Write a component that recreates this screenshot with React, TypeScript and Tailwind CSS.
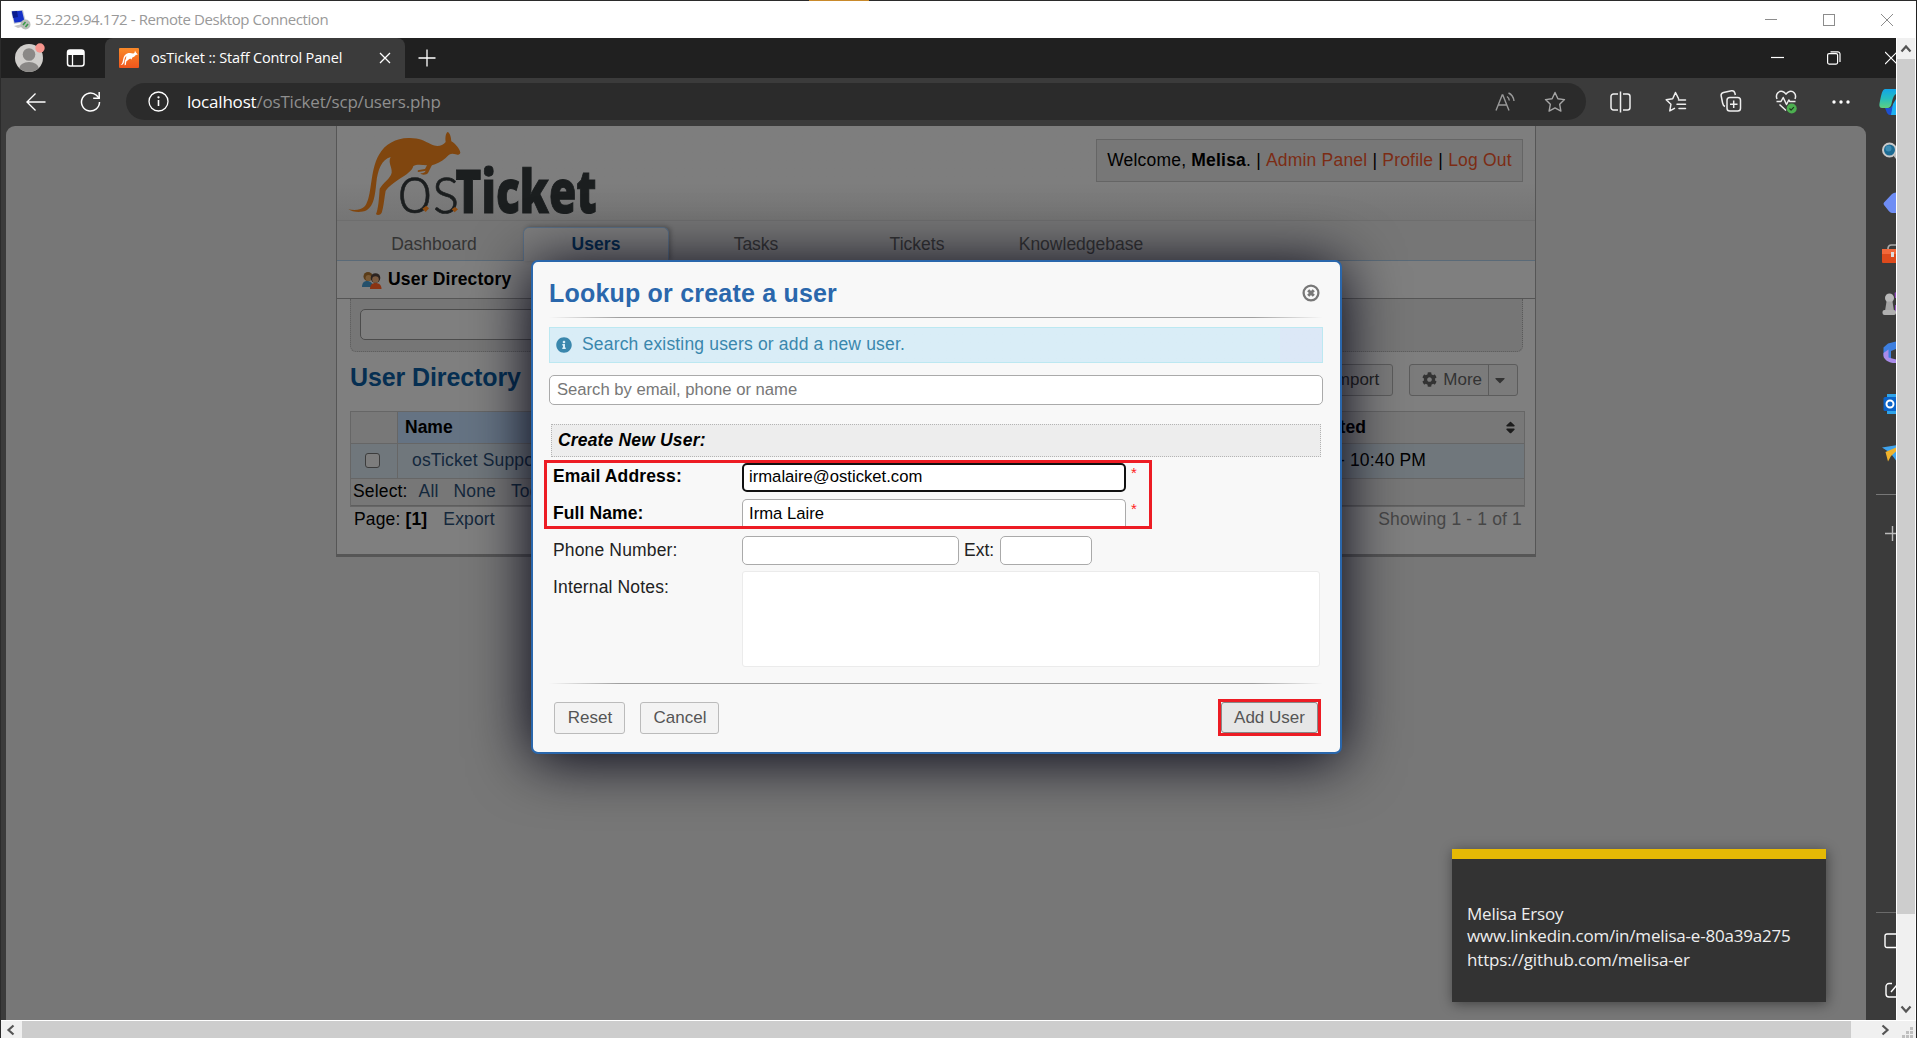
import React from "react";
import { FaCog, FaInfoCircle, FaSort, FaCaretDown } from "react-icons/fa";

const ui = "font-['Open_Sans','Noto_Sans',sans-serif]";

function TitleBar() {
  return (
    <div className={`flex h-[37px] shrink-0 items-center bg-white pl-[9px] ${ui}`}>
      <svg width="22" height="22" viewBox="0 0 22 22">
        <path d="M1 2l12-1 3 12-12 2z" fill="#c9ced6" />
        <path d="M2 2.500l10-.8 2.500 10.500-10 1.500z" fill="#1531c8" />
        <path d="M2 2.500l5-.4 1 6-5 .8z" fill="#0a1c8c" />
        <path d="M4 17l8-2 3 2-7 2z" fill="#c4c4c4" />
        <circle cx="15.500" cy="15.500" r="5" fill="#b9bdb9" />
        <path d="M13 16l2.500-3M15.500 18l2.500-3" stroke="#3b9a4a" strokeWidth="1.600" />
      </svg>
      <span className="ml-[3px] text-[15px] tracking-[-0.41px] whitespace-nowrap text-[#999]">
        52.229.94.172 - Remote Desktop Connection
      </span>
      <div className="ml-auto flex items-center gap-[46px] pr-[23px] text-[#8c8c8c]">
        <svg width="12" height="12" viewBox="0 0 12 12" stroke="currentColor" fill="none"><path d="M0 5.500h12" /></svg>
        <svg width="12" height="12" viewBox="0 0 12 12" stroke="currentColor" fill="none"><rect x=".5" y=".5" width="11" height="11" /></svg>
        <svg width="12" height="12" viewBox="0 0 12 12" stroke="currentColor" fill="none"><path d="M0 0l12 12M12 0L0 12" /></svg>
      </div>
    </div>
  );
}

function TabStrip() {
  return (
    <div className={`flex h-[40px] shrink-0 items-center bg-[#202020] text-white ${ui}`}>
      <div className="flex h-full w-[104px] items-center pl-[14px]">
        <svg width="32" height="30" viewBox="0 0 32 30">
          <clipPath id="avatar"><circle cx="14" cy="15" r="14" /></clipPath>
          <circle cx="14" cy="15" r="14" fill="#d0cecb" />
          <g clipPath="url(#avatar)" fill="#8a8886">
            <circle cx="14" cy="11.500" r="6.300" />
            <ellipse cx="14" cy="26" rx="10" ry="7" />
          </g>
          <circle cx="25" cy="5" r="4.700" fill="#f7958d" />
        </svg>
        <svg className="ml-[19px]" width="20" height="20" viewBox="0 0 20 20" fill="none">
          <rect x="1.500" y="2" width="16.500" height="16" rx="2.500" stroke="#fff" strokeWidth="1.500" />
          <path d="M1.500 7V4a2 2 0 012-2h12.500a2 2 0 012 2v3z" fill="#fff" />
          <path d="M6.500 7v11" stroke="#fff" strokeWidth="1.300" />
        </svg>
      </div>
      <div className="flex h-full w-[300px] items-center rounded-t-lg bg-[#3b3b3b] pl-[14px]">
        <svg width="20" height="20" viewBox="0 0 20 20">
          <defs>
            <linearGradient id="fav" x1="0" y1="0" x2="0" y2="1"><stop offset="0" stopColor="#fa8a2a" /><stop offset="1" stopColor="#f0551c" /></linearGradient>
          </defs>
          <rect width="20" height="20" rx="1" fill="url(#fav)" />
          <path d="M1.500 16.800C4.500 17.200 5 14.500 5.300 12.500C5.600 10.500 6.200 8.800 7.300 8L7 10.500L5.800 13L5.600 17.300L6.800 17L7.300 13.600L10 11.200L11.200 10.600L12.400 11.600L13.600 9.300C15 9 16 8 16.800 6.900L18.800 6.600L16.800 4.300L16 2.600L15.600 4.600C14.800 6 13.200 5.200 11 5.100C7 5 5 7.500 4.200 11C3.600 14 3.500 16 1.500 16.800Z" fill="#fff" />
        </svg>
        <span className="ml-[12px] w-[212px] text-[14.500px] tracking-[-0.17px] whitespace-nowrap">osTicket :: Staff Control Panel</span>
        <svg className="ml-[16px]" width="12" height="12" viewBox="0 0 12 12" stroke="#fff" strokeWidth="1.300"><path d="M1 1l10 10M11 1L1 11" /></svg>
      </div>
      <svg className="ml-[13px]" width="18" height="18" viewBox="0 0 18 18" stroke="#fff" strokeWidth="1.300"><path d="M9 .5v17M.5 9h17" /></svg>
      <div className="ml-auto flex items-center">
        <svg width="13" height="14" viewBox="0 0 13 14" stroke="#fff" strokeWidth="1.200"><path d="M0 6.500h13" /></svg>
        <svg className="ml-[43px]" width="14" height="14" viewBox="0 0 14 14" stroke="#fff" strokeWidth="1.200" fill="none">
          <rect x=".6" y="2.600" width="10" height="10.500" rx="1.500" />
          <path d="M3.500 .8h7a2.300 2.300 0 012.500 2.300v8" />
        </svg>
        <svg className="ml-[44px]" width="11" height="14" viewBox="0 0 11 14" stroke="#fff" strokeWidth="1.200"><path d="M0 1l12 12M12 1L0 13" /></svg>
      </div>
    </div>
  );
}

function Toolbar() {
  return (
    <div className={`flex h-[48px] shrink-0 items-center bg-[#3b3b3b] pb-px ${ui}`}>
      <svg className="ml-[25px]" width="20" height="20" viewBox="0 0 21 20" stroke="#fff" strokeWidth="1.400" fill="none"><path d="M20.500 10H1M10 1L1 10l9 9" /></svg>
      <svg className="ml-[34px]" width="21" height="22" viewBox="0 0 21 22" stroke="#fff" strokeWidth="1.500" fill="none">
        <path d="M19.500 11a9 9 0 11-3-6.700L19 7" />
        <path d="M19.200 1v6.300h-6" />
      </svg>
      <div className="ml-[25px] flex h-[37px] w-[1460px] items-center rounded-full bg-[#2b2b2b] pr-[20px] pl-[22px]">
        <svg width="21" height="21" viewBox="0 0 21 21" stroke="#fff" strokeWidth="1.300" fill="none">
          <circle cx="10.500" cy="10.500" r="9.500" />
          <path d="M10.500 9v6" strokeWidth="1.600" />
          <circle cx="10.500" cy="6.300" r=".5" />
        </svg>
        <span className="ml-[18px] pt-px text-[17px] tracking-[-0.2px] whitespace-nowrap text-[#8f8f8f]">
          <span className="text-white">localhost</span>/osTicket/scp/users.php
        </span>
        <svg className="ml-auto" width="22" height="20" viewBox="0 0 22 20" stroke="#999" strokeWidth="1.400" fill="none">
          <path d="M1 18.500L7.200 3h.6L14 18.500M3.300 13h8.400M12 4.500c1.500 1 2.200 2.300 2.300 4M13.500 1c3 1.300 5 4 5.500 8" />
        </svg>
        <svg className="ml-[27px]" width="22" height="22" viewBox="0 0 22 22" stroke="#a5a5a5" strokeWidth="1.400" fill="none" strokeLinejoin="round">
          <path d="M11 1.500l2.900 6.200 6.600.9-4.800 4.700 1.200 6.800L11 16.900l-5.900 3.200 1.200-6.800L1.500 8.600l6.600-.9z" />
        </svg>
      </div>
      <svg className="ml-[24px]" width="21" height="22" viewBox="0 0 21 22" stroke="#eee" strokeWidth="1.500" fill="none">
        <path d="M8 3H3.500A2.500 2.500 0 001 5.500v11A2.500 2.500 0 003.500 19H8M13 3h4.500A2.500 2.500 0 0120 5.500v11a2.500 2.500 0 01-2.500 2.500H13M10.500 .5v21" />
      </svg>
      <svg className="ml-[34px]" width="22" height="22" viewBox="0 0 22 22" stroke="#eee" strokeWidth="1.500" fill="none" strokeLinejoin="round" strokeLinecap="round">
        <path d="M13.500 7.500L10.500 1.500 7.700 7.700 1.200 8.700l4.700 4.600-1.100 6.600 4.700-2.500M13.500 9h7M12 13.200h8.500M14 17.500h6.500" />
      </svg>
      <svg className="ml-[33px]" width="22" height="23" viewBox="0 0 22 23" stroke="#eee" strokeWidth="1.500" fill="none">
        <rect x="7" y="7.500" width="13.500" height="13.500" rx="2.800" />
        <path d="M13.700 10.500v7.500M10 14.300h7.500M5 16.500C3.500 16 3 15 2.600 13L1.200 6C.8 4 1.800 2.800 3.500 2.400l8-1.600C13.500.5 14.500 1.500 15 3.500l.3 1.500" />
      </svg>
      <svg className="ml-[33px]" width="23" height="26" viewBox="0 0 23 26" stroke="#eee" strokeWidth="1.500" fill="none" strokeLinejoin="round">
        <path d="M2 10C0 5 4 1.500 7.500 2.500c1.500.4 2.600 1.400 3.500 2.600 1-1.200 2-2.200 3.500-2.600C18 1.500 22 5 20 10M1.500 12.500H6l2.200-4 3.300 7 2.300-4.500 1 1.500H20.500M4.500 15.500l6.500 6" />
        <circle cx="16.700" cy="19.500" r="5" fill="#4caf50" stroke="none" />
        <path d="M14.500 19.500l1.600 1.600 2.800-3" stroke="#1d3b1e" strokeWidth="1.200" />
      </svg>
      <svg className="ml-[34px]" width="18" height="4" viewBox="0 0 18 4" fill="#fff"><circle cx="2" cy="2" r="1.700" /><circle cx="9" cy="2" r="1.700" /><circle cx="16" cy="2" r="1.700" /></svg>
      <svg className="ml-auto" width="17" height="28" viewBox="0 0 17 28">
        <defs>
          <linearGradient id="cp" x1="0" y1="0" x2="0" y2="1"><stop offset="0" stopColor="#12a5e8" /><stop offset=".5" stopColor="#25bdc0" /><stop offset="1" stopColor="#5fd07e" /></linearGradient>
        </defs>
        <path d="M6 1h11v5c-3 2-3.500 6-4.500 10-.7 2.800-2 4-4 4H3c-3 0-3-3-2-7C2.500 6 3 2 6 1z" fill="url(#cp)" />
        <path d="M6 20h5l6-6v13h-6c-3 0-3.500-4-5-7z" fill="#1d4fd0" />
        <path d="M14 16l3-5v16h-5z" fill="#1eb1f0" />
      </svg>
    </div>
  );
}

const sidebarIcons: React.ReactNode[] = [
  <g key="search">
    <circle cx="10.500" cy="24" r="6.500" fill="#1c6b93" stroke="#c9c9c9" strokeWidth="2" />
    <circle cx="9.500" cy="22.500" r="3" fill="#3d8cb3" />
    <path d="M15.500 28.500l3 4" stroke="#bbb" strokeWidth="3" />
  </g>,
  <path key="tag" d="M5 25.500L13 17q1.500-1.500 4-1.500V36h-4q-1.500 0-3-1.700L5 28q-1-1.200 0-2.500z" fill="#6e8df5" />,
  <g key="toolbox">
    <path d="M9 22c0-3 1-4 3.500-4H17" stroke="#aaa" strokeWidth="1.700" fill="none" />
    <rect x="3" y="22" width="16" height="14" rx="1" fill="#dd4a1c" />
    <rect x="3" y="22" width="16" height="5" fill="#f2683a" />
    <rect x="12" y="25" width="3" height="5" fill="#ddd" />
  </g>,
  <g key="chess">
    <path d="M15.500 15l1.500-1v6h-1zM16 27h1v7h-1z" fill="#8d49b8" />
    <circle cx="10.500" cy="20" r="4.500" fill="#b9b9b9" />
    <path d="M7.500 23.500h6l1.500 9.500h-9z" fill="#a5a5a5" />
    <rect x="3.500" y="32" width="13.500" height="5" rx="2" fill="#b0b0b0" />
  </g>,
  <g key="m365">
    <path d="M9 15.500l8-2v7.500l-5 2v9l-4-1.500-3.500-3v-8z" fill="#3d7fe0" />
    <path d="M4.500 25l5-3.500v8l7.500 2v3.500h-3c-4 0-9.500-4-9.500-7z" fill="#a98bea" />
  </g>,
  <g key="outlook">
    <rect x="8" y="15" width="10" height="20" fill="#2fa4ea" />
    <rect x="4.500" y="18" width="15" height="14" rx="1.500" fill="#0b63c8" />
    <circle cx="11" cy="25" r="3.500" fill="none" stroke="#fff" strokeWidth="2" />
  </g>,
  <g key="plane">
    <path d="M3 18.500L18 16v17l-6.500-9z" fill="#3fa4ee" />
    <path d="M6.500 23L18 18v3.500L12 27l-3 5.500z" fill="#f0b32c" />
  </g>,
];

function Sidebar() {
  return (
    <div className="flex w-[30px] shrink-0 flex-col bg-[#3b3b3b]">
      {sidebarIcons.map((icon, i) => (
        <svg key={i} className="ml-[13px]" width="17" height="50.500" viewBox="0 0 17 50.500">{icon}</svg>
      ))}
      <div className="mt-[14px] ml-[10px] h-px bg-[#777]" />
      <svg className="mt-[31px] ml-[19px]" width="11" height="16" viewBox="0 0 11 16" stroke="#bbb" strokeWidth="1.400"><path d="M7.500 0v15M0 7.500h12" /></svg>
      <div className="mt-auto ml-[10px] h-px bg-[#6a6a6a]" />
      <svg className="mt-[20px] ml-[18px]" width="12" height="16" viewBox="0 0 12 16" stroke="#fff" strokeWidth="1.400" fill="none"><rect x="1" y="1" width="18" height="13.500" rx="2" /></svg>
      <svg className="mt-[33px] mb-[22px] ml-[19px]" width="11" height="16" viewBox="0 0 11 16" stroke="#fff" strokeWidth="1.400" fill="none"><path d="M7 1.500H4a3 3 0 00-3 3V12a3 3 0 003 3h8M6 10l6-7" /></svg>
    </div>
  );
}

function Logo() {
  return (
    <svg className="overflow-visible" width="254" height="87" viewBox="45 30 762 261">
      <path
        fill="#80460f"
        d="M52 268C72 272 92 270 102 258C124 230 116 150 144 104C162 72 195 55 232 54C262 53 280 62 300 73C318 82 334 78 344 66C342 52 344 40 350 36C358 40 360 52 361 64C374 72 386 86 388 98C386 104 380 106 374 103C362 98 354 102 344 114C330 126 314 132 303 136C296 146 294 160 286 163C278 166 270 164 268 160C276 160 282 158 284 152L262 156C258 154 260 150 264 150L282 147L288 136C272 134 256 132 247 138C244 152 226 164 206 176C186 190 172 200 164 212C160 232 158 262 152 278C148 286 138 286 135 282C142 266 144 236 146 206C158 186 178 176 182 158C184 142 170 128 179 111C152 118 140 150 136 188C132 228 128 256 108 270C90 280 64 276 52 268Z"
      />
      <g fill="#1b1e1f" stroke="#1b1e1f">
        <text x="199" y="280" fontSize="210" fontFamily="'Lato', 'Open Sans', sans-serif" fontWeight="300" strokeWidth="2" textLength="186" lengthAdjust="spacingAndGlyphs">os</text>
        <text x="373" y="279" fontSize="180" fontFamily="'Open Sans', sans-serif" fontWeight="800" strokeWidth="3" textLength="424" lengthAdjust="spacingAndGlyphs">Ticket</text>
      </g>
      <path d="M274 266l12-9 8 8-10 11zM362 268l10-7 9 7-10 9z" fill="#8f4d12" />
    </svg>
  );
}

const linkRed = "text-[#7c2c14]";

function PageHeader() {
  return (
    <div className="flex h-[95px] items-start justify-between border-b border-[#6e6e6e] bg-linear-to-b from-[#7e7e7e] from-60% to-[#757575] pt-[4px] pr-[12px] pl-[9px]">
      <Logo />
      <div className="mt-[9px] flex h-[43px] w-[427px] items-center justify-center border border-[#656565] bg-[#777] tracking-[0.2px] whitespace-pre text-black">
        Welcome, <b>Melisa</b>. | <span className={linkRed}>Admin Panel</span> | <span className={linkRed}>Profile</span> | <span className={linkRed}>Log Out</span>
      </div>
    </div>
  );
}

function Nav() {
  const tab = "flex h-[34px] w-[144px] items-center justify-center pt-[2px]";
  return (
    <div className="flex h-[40px] items-end gap-[17px] border-b border-[#5a6a78] bg-[#767676] pl-[25px] text-[#343434]">
      <div className={tab}>Dashboard</div>
      <div className="-mb-px mr-[-2px] flex h-[34px] w-[146px] items-center justify-center rounded-t-[6px] border border-b-0 border-[#5a6f85] bg-[#7e7e7e] font-bold tracking-[0.1px] text-[#06294b] shadow-[2px_-1px_4px_rgba(0,0,0,0.25)]">Users</div>
      <div className={tab}>Tasks</div>
      <div className={tab}>Tickets</div>
      <div className="flex h-[34px] w-[150px] items-center justify-center pt-[2px]">Knowledgebase</div>
    </div>
  );
}

function SubNav() {
  return (
    <div className="flex h-[38px] items-center border-b border-[#555] pl-[25px] font-bold text-black">
      <svg width="20" height="18" viewBox="0 0 20 18">
        <path d="M0 16c0-4 2-6 5-6s6 2 6 6z" fill="#24506b" />
        <circle cx="6" cy="5.500" r="4.500" fill="#5a3c18" />
        <circle cx="6.500" cy="7" r="3" fill="#7a5a35" />
        <path d="M8 18c0-4 2-6 5.500-6s6 2 6 6z" fill="#8a3414" />
        <circle cx="13.500" cy="7" r="4.800" fill="#2b2320" />
        <circle cx="13.500" cy="8.500" r="3.300" fill="#7a5a40" />
      </svg>
      <span className="ml-[6px] tracking-[0.2px]">User Directory</span>
    </div>
  );
}

function Directory() {
  const btn = "flex h-[32px] items-center rounded-[3px] border border-[#5c5c5c] bg-[#7b7b7b] text-[17px] tracking-normal";
  return (
    <div className="pr-[10px] pl-[13px] tracking-[0.15px]">
      <div className="mr-[2px] flex h-[53px] items-center rounded-b-[6px] border border-t-0 border-dotted border-[#5a5a5a] bg-[#767676] pb-[2px] pl-[9px]">
        <div className="h-[31px] w-[400px] rounded-[5px] border border-[#4c4c4c] bg-[#7f7f7f]" />
      </div>
      <div className="flex h-[59px] items-center pb-[6px]">
        <h2 className="mt-[-2px] text-[25px] font-bold tracking-[-0.1px] text-[#062f52]">User Directory</h2>
        <div className={`${btn} mt-[2px] ml-auto pr-[13px] pl-[34px] text-[#222]`}>Import</div>
        <div className={`${btn} mt-[2px] mr-[7px] ml-[16px] text-[#333]`}>
          <FaCog className="ml-[12px]" size={15} />
          <span className="mr-[6px] ml-[6px]">More</span>
          <span className="flex h-full w-[29px] items-center justify-center border-l border-[#5c5c5c] pr-[6px]"><FaCaretDown size={16} /></span>
        </div>
      </div>
      <div className="border border-[#666] text-black">
        <div className="grid h-[32px] grid-cols-[47px_880px_1fr] items-stretch border-b border-[#666] bg-[#787878] font-bold">
          <div className="border-r border-[#666]" />
          <div className="flex items-center bg-[#657383] pb-px pl-[7px] tracking-normal">Name</div>
          <div className="flex items-center justify-between pr-[6px] pb-px pl-[22px]"><span>Created</span><FaSort size={15} className="text-[#1c1c1c]" /></div>
        </div>
        <div className="grid h-[35px] grid-cols-[47px_880px_1fr] items-stretch border-b border-[#666] bg-[#70777c]">
          <div className="flex items-center justify-center border-r border-[#666] pr-[3px] pb-px"><span className="size-[15px] rounded-[3px] border border-[#3c3c3c] bg-[#7d7d7d]" /></div>
          <div className="flex items-center pb-[2px] pl-[14px] text-[#14283c]">osTicket Support</div>
          <div className="flex items-center pb-[2px] pl-[61px]">- 10:40 PM</div>
        </div>
        <div className="flex h-[27px] items-center gap-[15px] border-b border-[#5e5e5e] bg-[#777] pb-[1px] pl-[2px]">
          <span className="mr-[-4px]">Select:</span>
          <span className="text-[#14283c]">All</span>
          <span className="text-[#14283c]">None</span>
          <span className="text-[#14283c]">Toggle</span>
        </div>
      </div>
      <div className="flex h-[25px] items-center pl-[4px]">
        <span>Page: <b>[1]</b></span>
        <span className="ml-[16px] text-[#14283c]">Export</span>
        <span className="mr-[3px] ml-auto text-[#464646]">Showing 1 - 1 of 1</span>
      </div>
    </div>
  );
}

function Rule({ className }: { className: string }) {
  return (
    <div className={`flex h-px shrink-0 ${className}`}>
      <div className="w-[70px] bg-linear-to-r from-transparent to-[#a0a0a0]" />
      <div className="flex-1 bg-[#a0a0a0]" />
      <div className="w-[70px] bg-linear-to-r from-[#a0a0a0] to-transparent" />
    </div>
  );
}

function Dialog() {
  const field = "rounded-[5px] border border-[#aaa] bg-white";
  const btn = "flex items-center justify-center rounded-[3px] border border-[#bbb] bg-[#f3f3f3] pl-px text-[17px] text-[#555]";
  return (
    <div className="absolute top-[260px] left-[530px] flex h-[494px] w-[811px] flex-col rounded-[7px] border-2 border-[#2a67ac] bg-[#f8f8f8] pr-[17px] pl-[16px] text-black shadow-[0_5px_60px_#000011]">
      <div className="flex h-[55px] items-center justify-between pt-[7px] pr-[3px]">
        <h3 className="pt-px text-[25px] font-bold tracking-[0.2px] text-[#2a67ac]">Lookup or create a user</h3>
        <svg width="18" height="18" viewBox="0 0 18 18" fill="none" stroke="#777">
          <circle cx="9" cy="9" r="7.400" strokeWidth="2.300" />
          <path d="M6.200 6.200l5.600 5.600M11.800 6.200l-5.600 5.600" strokeWidth="3" />
        </svg>
      </div>
      <Rule className="" />
      <div className="mt-[9px] flex h-[36px] items-center border border-[#bce8f1] bg-linear-to-r from-[#d9edf7] from-[94.600%] to-[#dce8f7] to-[94.600%] pb-[1px] pl-[6px] text-[#3a87ad]">
        <FaInfoCircle size={16} />
        <span className="ml-[10px] tracking-[0.17px]">Search existing users or add a new user.</span>
      </div>
      <div className={`${field} mt-[12px] flex h-[30px] items-center pb-[1px] pl-[7px] text-[16.670px] tracking-[-0.02px] text-[#777]`}>Search by email, phone or name</div>
      <div className="mx-[2px] mt-[19px] flex h-[33px] items-center border border-dotted border-[#b4b4b4] bg-[#ededed] pl-[6px] font-bold tracking-[0.17px] italic">Create New User:</div>
      <div className="relative mt-[3px] flex h-[71px] flex-col pl-[4px]">
        <div className="absolute top-0 left-[-5px] h-[69px] w-[608px] border-[3px] border-[#ed1c24]" />
        <div className="mt-[3px] flex h-[28px] items-center">
          <span className="w-[189px] pb-[2px] font-bold tracking-[0.15px]">Email Address:</span>
          <div className="flex h-[29px] w-[384px] items-center rounded-[5px] border-2 border-[#111] bg-white pb-[1px] pl-[5px] text-[16.670px]">irmalaire@osticket.com</div>
          <span className="ml-[5px] self-start text-[15px] leading-[20px] text-[#f22]">*</span>
        </div>
        <div className="mt-[8px] flex h-[28px] items-center">
          <span className="w-[189px] pt-px font-bold tracking-[0.1px]">Full Name:</span>
          <div className={`${field} flex h-[28px] w-[384px] items-center rounded-b-none border-b-0 pl-[6px] text-[16.670px]`}>Irma Laire</div>
          <span className="ml-[5px] self-start text-[15px] leading-[20px] text-[#f22]">*</span>
        </div>
      </div>
      <div className="mt-[5px] flex h-[29px] items-center pl-[4px]">
        <span className="w-[189px] tracking-[0.15px] text-[#222]">Phone Number:</span>
        <div className={`${field} h-[29px] w-[217px]`} />
        <span className="w-[41px] pl-[5px] text-[#222]">Ext:</span>
        <div className={`${field} h-[29px] w-[92px]`} />
      </div>
      <div className="mt-[6px] flex pl-[4px]">
        <span className="w-[189px] pt-[3px] tracking-[0.15px] text-[#222]">Internal Notes:</span>
        <div className="h-[96px] w-[578px] rounded-[3px] border border-[#ebebeb] bg-white" />
      </div>
      <Rule className="mt-[16px]" />
      <div className="mt-[15px] flex items-center pr-[2px] pl-[5px]">
        <div className={`${btn} h-[32px] w-[71px]`}>Reset</div>
        <div className={`${btn} ml-[15px] h-[32px] w-[79px]`}>Cancel</div>
        <div className="ml-auto flex h-[37px] w-[103px] border-[3px] border-[#ed1c24]">
          <div className="flex flex-1 items-center justify-center rounded-[3px] border border-[#888] bg-[#e6e6e6] text-[17px] text-[#555]">Add User</div>
        </div>
      </div>
    </div>
  );
}

function StickyNote() {
  return (
    <div className={`absolute top-[849px] left-[1451px] flex h-[153px] w-[374px] flex-col border-t-[10px] border-[#e6b905] bg-[#333] pt-[43px] pl-[15px] text-[17px] leading-[23px] tracking-[-0.2px] text-[#eee] shadow-[1px_2px_12px_rgba(0,0,0,0.45)] ${ui}`}>
      <span>Melisa Ersoy</span>
      <span className="leading-[22px]">www.linkedin.com/in/melisa-e-80a39a275</span>
      <span className="leading-[25px] tracking-[-0.15px]">https://github.com/melisa-er</span>
    </div>
  );
}

function Chevron({ d }: { d: string }) {
  return <svg width="12" height="12" viewBox="0 0 12 12" fill="none" stroke="#555" strokeWidth="2.200"><path d={d} /></svg>;
}

export default function App() {
  return (
    <div className="relative flex h-[1038px] w-[1917px] flex-col overflow-hidden border-x border-l-[#2b2b2b] border-r-[#222] bg-[#f0f0f0] font-['Liberation_Sans',Arial,sans-serif] text-[17.500px]">
      <div className="flex h-px shrink-0 bg-[#2b2b2b]"><div className="ml-[808px] h-px w-[60px] bg-[#c98a2b]" /></div>
      <TitleBar />
      <div className="flex h-[982px] shrink-0">
        <div className="flex w-[1895px] shrink-0 flex-col">
          <TabStrip />
          <Toolbar />
          <div className="flex flex-1 bg-[#3b3b3b]">
            <div className="ml-[5px] flex w-[1860px] items-start rounded-t-[9px] bg-[#777]">
              <div className="ml-[330px] h-[431px] w-[1200px] border-x border-b-[3px] border-[#565656] bg-[#7f7f7f]">
                <PageHeader />
                <Nav />
                <SubNav />
                <Directory />
              </div>
            </div>
            <Sidebar />
          </div>
        </div>
        <div className="flex w-[20px] shrink-0 flex-col border-x border-white bg-[#f0f0f0]">
          <div className="flex h-[21px] items-center justify-center"><Chevron d="M1.500 8.500L6 3.500l4.500 5" /></div>
          <div className="h-[855px] bg-[#cdcdcd]" />
          <div className="mt-auto flex h-[23px] items-center justify-center"><Chevron d="M1.500 3.500L6 8.500l4.500-5" /></div>
        </div>
      </div>
      <div className="flex h-[18px] shrink-0 items-stretch border-t border-white bg-[#f0f0f0]">
        <div className="flex w-[21px] items-center justify-center pr-[2px]"><Chevron d="M8.500 1.500L3.500 6l5 4.500" /></div>
        <div className="w-[1829px] bg-[#cdcdcd]" />
        <div className="ml-[28px] flex items-center"><Chevron d="M3.500 1.500L8.500 6l-5 4.500" /></div>
        <svg className="mt-auto mr-[2px] ml-auto" width="12" height="11" viewBox="0 0 12 11" fill="#bfbfbf">
          <path d="M8 0h3v3H8zM4 4h3v3H4zM8 4h3v3H8zM0 8h3v3H0zM4 8h3v3H4zM8 8h3v3H8z" />
        </svg>
      </div>
      <Dialog />
      <StickyNote />
    </div>
  );
}
